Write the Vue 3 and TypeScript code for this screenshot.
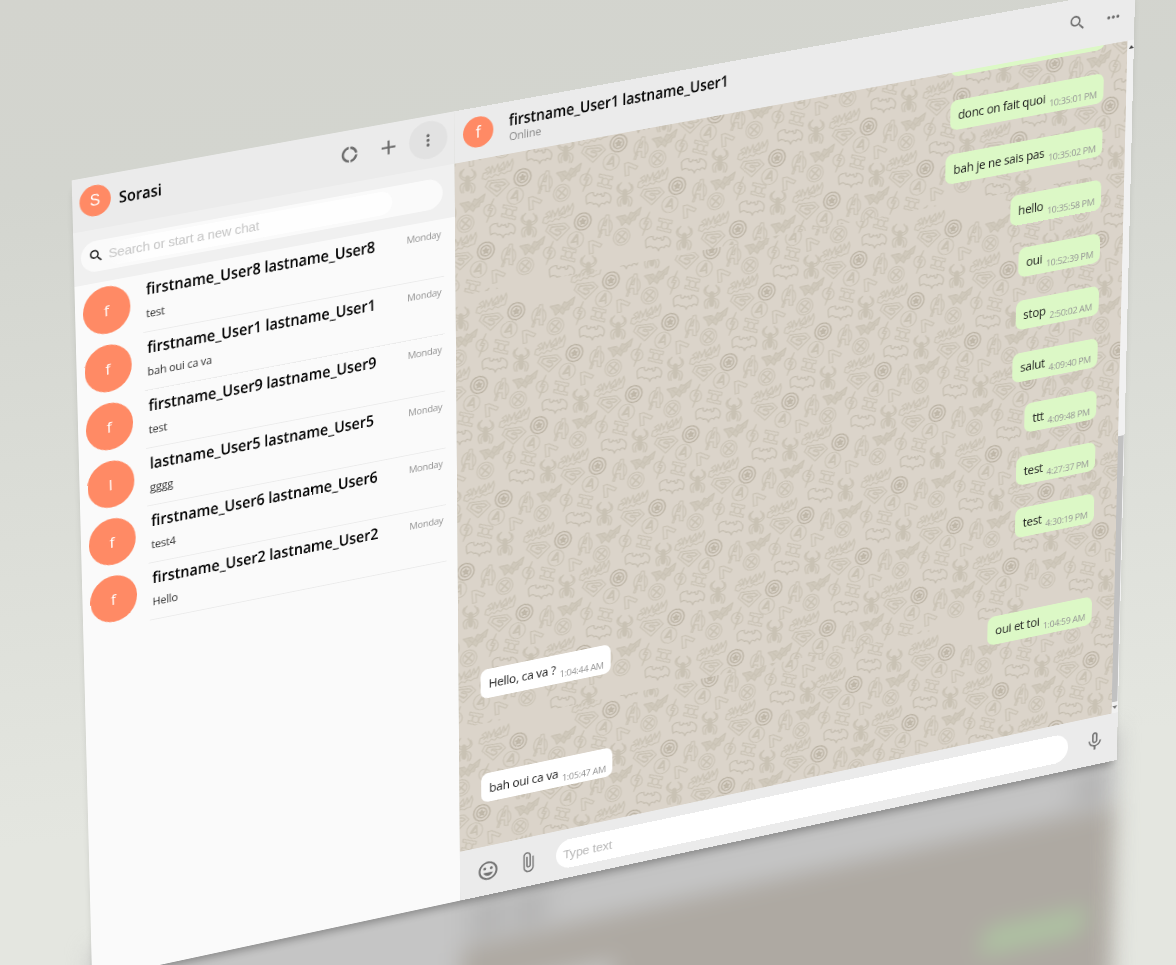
<script setup lang="ts">
interface Chat { initial: string; name: string; last: string }
interface Message { text: string; time: string; mine: boolean; wide?: boolean }

const chats: Chat[] = [
  { initial: 'f', name: 'firstname_User8 lastname_User8', last: 'test' },
  { initial: 'f', name: 'firstname_User1 lastname_User1', last: 'bah oui ca va' },
  { initial: 'f', name: 'firstname_User9 lastname_User9', last: 'test' },
  { initial: 'l', name: 'lastname_User5 lastname_User5', last: 'gggg' },
  { initial: 'f', name: 'firstname_User6 lastname_User6', last: 'test4' },
  { initial: 'f', name: 'firstname_User2 lastname_User2', last: 'Hello' },
]

const messages: Message[] = [
  { text: '', time: '', mine: true, wide: true },
  { text: 'donc on fait quoi', time: '10:35:01 PM', mine: true },
  { text: 'bah je ne sais pas', time: '10:35:02 PM', mine: true },
  { text: 'hello', time: '10:35:58 PM', mine: true },
  { text: 'oui', time: '10:52:39 PM', mine: true },
  { text: 'stop', time: '2:50:02 AM', mine: true },
  { text: 'salut', time: '4:09:40 PM', mine: true },
  { text: 'ttt', time: '4:09:48 PM', mine: true },
  { text: 'test', time: '4:27:37 PM', mine: true },
  { text: 'test', time: '4:30:19 PM', mine: true },
  { text: 'Hello, ca va ?', time: '1:04:44 AM', mine: false },
  { text: 'oui et toi', time: '1:04:59 AM', mine: true },
  { text: 'bah oui ca va', time: '1:05:47 AM', mine: false },
]

// Origins of the doodle groups inside one wallpaper tile
const tile = { x: 440, y: 213, width: 520, height: 513 }
const origins: number[][] = [
  [543, 167], [839, 198], [733, 215], [614, 228], [503, 243], [909, 259], [799, 276], [684, 290], [571, 305],
  [459, 321], [867, 336], [754, 351], [641, 367], [529, 382], [940, 397], [828, 412], [709, 428], [598, 444],
  [487, 461], [889, 473], [777, 490], [669, 508], [557, 524], [442, 539], [848, 553], [737, 570],
  [623, 583], [511, 602], [919, 617], [810, 634], [692, 645], [581, 666], [468, 679], [876, 696], [764, 709],
]
const cells = origins
  .flatMap(([x, y]) => [-tile.width, 0, tile.width].map((dx) => ({ x: x + dx - tile.x, y: y - tile.y })))
  .filter((c) => c.x > -150 && c.x < tile.width + 50)
</script>

<template>
  <div class="scene">
    <div class="plane">
      <div class="mirror">
        <div class="mirror-side"></div>
        <div class="mirror-chat">
          <div class="mirror-foot"><i></i><i></i><b></b><i></i></div>
          <div class="mirror-wall">
            <span class="white"></span>
            <span class="green"></span>
          </div>
        </div>
      </div>

      <div class="window">
        <aside class="side">
          <header class="bar side-bar">
            <div class="avatar small sans">S</div>
            <div class="me">Sorasi</div>
            <nav class="actions">
              <span class="btn">
                <svg width="21.5" height="21.5" viewBox="0 0 24 24"><path d="M11 5.08V2c-5 .5-9 4.81-9 10s4 9.5 9 10v-3.08c-3-.48-6-3.4-6-6.92s3-6.44 6-6.92zM18.97 11H22c-.47-5-4-8.530-9-9v3.08C16 5.510 18.540 8 18.970 11zM13 18.920V22c5-.47 8.530-4 9-9h-3.030c-.43 3-2.970 5.490-5.970 5.920z" /></svg>
              </span>
              <span class="btn">
                <svg width="27" height="27" viewBox="0 0 24 24"><path d="M19 13h-6v6h-2v-6H5v-2h6V5h2v6h6v2z" /></svg>
              </span>
              <span class="btn on">
                <svg width="21.5" height="21.5" viewBox="0 0 24 24"><path d="M12 8c1.100 0 2-.9 2-2s-.9-2-2-2-2 .9-2 2 .9 2 2 2zm0 2c-1.100 0-2 .9-2 2s.9 2 2 2 2-.9 2-2-.9-2-2-2zm0 6c-1.100 0-2 .9-2 2s.9 2 2 2 2-.9 2-2-.9-2-2-2z" /></svg>
              </span>
            </nav>
          </header>

          <div class="search">
            <div class="search-pill">
              <svg class="dark" width="18" height="18" viewBox="0 0 24 24"><path d="M15.500 14h-.79l-.28-.27C15.410 12.590 16 11.110 16 9.500 16 5.910 13.090 3 9.500 3S3 5.910 3 9.500 5.910 16 9.500 16c1.610 0 3.090-.59 4.230-1.570l.27.28v.79l5 4.990L20.490 19l-4.990-5zm-6 0C7.010 14 5 11.990 5 9.500S7.010 5 9.500 5 14 7.010 14 9.500 11.990 14 9.500 14z" /></svg>
              <div class="search-input">Search or start a new chat</div>
            </div>
          </div>

          <ul class="list">
            <li v-for="c in chats" :key="c.name" class="row">
              <div class="avatar">{{ c.initial }}</div>
              <div class="info">
                <div class="name">{{ c.name }}</div>
                <div class="last">{{ c.last }}</div>
                <span class="day">Monday</span>
              </div>
            </li>
          </ul>
        </aside>

        <section class="chat">
          <header class="bar chat-bar">
            <div class="avatar small">f</div>
            <div class="peer">
              <div class="peer-name">firstname_User1 lastname_User1</div>
              <div class="status">Online</div>
            </div>
            <nav class="actions">
              <span class="btn">
                <svg width="22.5" height="22.5" viewBox="0 0 24 24"><path d="M15.500 14h-.79l-.28-.27C15.410 12.590 16 11.110 16 9.500 16 5.910 13.090 3 9.500 3S3 5.910 3 9.500 5.910 16 9.500 16c1.610 0 3.090-.59 4.230-1.570l.27.28v.79l5 4.990L20.490 19l-4.990-5zm-6 0C7.010 14 5 11.990 5 9.500S7.010 5 9.500 5 14 7.010 14 9.500 11.990 14 9.500 14z" /></svg>
              </span>
              <span class="btn">
                <svg width="22" height="22" viewBox="0 0 24 24"><path d="M6 10c-1.100 0-2 .9-2 2s.9 2 2 2 2-.9 2-2-.9-2-2-2zm12 0c-1.100 0-2 .9-2 2s.9 2 2 2 2-.9 2-2-.9-2-2-2zm-6 0c-1.100 0-2 .9-2 2s.9 2 2 2 2-.9 2-2-.9-2-2-2z" /></svg>
              </span>
            </nav>
          </header>

          <div class="body">
            <div class="wall">
              <svg class="paper" viewBox="432.5 59 799 818.500" preserveAspectRatio="none">
                <defs>
                  <g id="doodles" fill="none" stroke="#c9c2b4" stroke-width="1.200" stroke-linejoin="round" stroke-linecap="round">
                    <g stroke="#bab2a3">
                      <circle r="9.800" stroke-width="1.500" />
                      <circle r="6" stroke-width="1.600" />
                      <path d="M0-3.500l1 2.300 2.500.2-1.900 1.700.6 2.500L0 2l-2.200 1.200.6-2.500L-3.500-1l2.500-.2z" fill="#c3bbac" />
                    </g>
                    <g transform="translate(-8.600 20)"><circle r="9.500" /><path d="M1.500-6L-5 2h7M2.500-5.500v11M-2 0l3.500-4.500" stroke-width="2" /></g>
                    <g transform="translate(45.600 26.400)"><circle r="9.800" /><circle r="6.800" /><path d="M-4.500-4.500l9 9M4.500-4.500l-9 9" stroke-width="2" /></g>
                    <g transform="matrix(1.110 .2 -.03 1.120 -27.600 -12.700)">
                      <path d="M-16 3l5-2-3-2 4-3 2 7 1-8 3 6 3-8 1 8 5-2-5-1 5-7 1 8 3-9 2 5 3-7 1 4-2 8-4 1-3 2-4-1-2 3-4-1-3 3-3-1-3 3-4-1z" />
                      <path d="M-12 4l3-3M-5 2l1-4M2 0l2-3M9-3l1-4" />
                    </g>
                    <g transform="matrix(1.110 .2 -.03 1.120 -28.800 6.800)">
                      <path d="M-13-1l3-6 17-2 5 5L-1 9z" />
                      <path d="M-9-1l2-4 12-1 3 2-3 2-5-1c-4 0-4 2 0 2s4 3-1 5zM-4 2l3 1" stroke-width="1.500" />
                    </g>
                    <g transform="matrix(1.110 .2 -.03 1.120 26 10.900)">
                      <path d="M-7 11L1-12h3l1 21H1V3h-4l-2 8zM-2-1h3l1-7z" />
                      <path d="M-1-9C-8-6-9 5-3 7M5-7c4 4 3 11 0 13" />
                    </g>
                    <path transform="matrix(1.110 .2 -.03 1.120 14.700 32.800)" d="M-6 7l-1-13 4-1 10 4-2 3-8-3 1 9z" />
                    <g transform="matrix(1.110 .2 -.03 1.120 53.800 4.800)" fill="#d0c9bc">
                      <path d="M-13 0l9-2 3 3 3-6 3 1 8-6-2 8-3 1-1 4-4 1-2 4-4-3-4 4-2-5z" />
                      <path d="M-7 1l4 3 3-4 2 3 6-7" />
                    </g>
                    <g transform="matrix(1.110 .2 -.03 1.120 73.800 16.400)"><circle r="6.200" /><path d="M4-12L-2 0h3l-4 12L3-2H0z" /></g>
                    <g transform="matrix(1.110 .2 -.03 1.120 96.200 22.700)">
                      <path d="M-6-8L8-5l-.5 3-3-.5-1.500 6 4 1-.5 3L-8 4l.5-3 4 .8 1-6-4-.8z" /><circle r="3.500" />
                    </g>
                    <path transform="matrix(1.110 .2 -.03 1.120 88.200 41.700)" d="M-13-3c2-4 6-4 8-4-1 3 1 4 3 3l1-2 1 1h2l1-1 1 3c2 0 3-1 2-4 3 0 6 2 7 4 1 2 0 5-1 7-3-3-5-1-5 1-2-2-5-1-6 3-1-4-4-4-6-3-1-2-4-3-7 0-1-3-1-5-1-8z" stroke="#c3bcae" />
                    <g transform="matrix(1.110 .2 -.03 1.120 119.400 41.700)" stroke-width="1.400">
                      <path d="M-2-2c0-4 4-4 4 0v9c0 4-4 4-4 0z" fill="#c9c2b4" />
                      <path d="M-2-3c-6-1-6-5-2-9M2-3c6-1 6-5 2-9M-2 0c-8-3-7-7-5-10M2 0c8-3 7-7 5-10M-2 2c-6 0-7 5-4 10M2 2c6 0 7 5 4 10M-3 4c-2 2-2 5-1 8M3 4c2 2 2 5 1 8" />
                    </g>
                  </g>
                  <pattern id="tile" patternUnits="userSpaceOnUse" :x="tile.x" :y="tile.y" :width="tile.width" :height="tile.height">
                    <use v-for="(c, i) in cells" :key="i" href="#doodles" :x="c.x" :y="c.y" />
                  </pattern>
                </defs>
                <rect x="432" y="59" width="800" height="819" fill="url(#tile)" />
              </svg>
              <div class="thread">
                <div v-for="(m, i) in messages" :key="i" class="bubble" :class="{ mine: m.mine, wide: m.wide }">
                  <span class="text">{{ m.text }}</span>
                  <span class="time">{{ m.time }}</span>
                </div>
              </div>
            </div>
            <div class="track">
              <i class="up"></i>
              <div class="thumb"></div>
              <i class="down"></i>
            </div>
          </div>

          <footer class="composer">
            <svg class="smile" width="27" height="27" viewBox="0 0 24 24"><path d="M11.990 2C6.470 2 2 6.480 2 12s4.470 10 9.990 10C17.520 22 22 17.520 22 12S17.520 2 11.990 2zM12 20c-4.420 0-8-3.580-8-8s3.580-8 8-8 8 3.580 8 8-3.580 8-8 8zm3.500-9c.83 0 1.500-.67 1.500-1.500S16.330 8 15.500 8 14 8.670 14 9.500s.67 1.500 1.500 1.500zm-7 0c.83 0 1.500-.67 1.500-1.500S9.330 8 8.500 8 7 8.670 7 9.500 7.670 11 8.500 11zm3.500 6.500c2.330 0 4.310-1.460 5.110-3.500H6.890c.8 2.040 2.780 3.500 5.110 3.500z" /></svg>
            <svg class="clip" width="27" height="27" viewBox="0 0 24 24"><path d="M16.500 6v11.500c0 2.210-1.790 4-4 4s-4-1.790-4-4V5c0-1.380 1.120-2.500 2.500-2.500s2.500 1.120 2.500 2.500v10.500c0 .55-.45 1-1 1s-1-.45-1-1V6H10v9.500c0 1.380 1.120 2.500 2.500 2.500s2.500-1.120 2.500-2.500V5c0-2.210-1.790-4-4-4S7 2.790 7 5v12.500c0 3.040 2.460 5.500 5.500 5.500s5.500-2.460 5.500-5.500V6h-1.500z" /></svg>
            <div class="field">Type text</div>
            <svg class="mic" width="27" height="27" viewBox="0 0 24 24"><path d="M12 14c1.660 0 2.990-1.340 2.990-3L15 5c0-1.660-1.340-3-3-3S9 3.340 9 5v6c0 1.660 1.340 3 3 3zm-1.200-9.100c0-.66.54-1.200 1.200-1.200.66 0 1.200.54 1.200 1.200l-.01 6.200c0 .66-.53 1.200-1.190 1.200-.66 0-1.200-.54-1.200-1.200V4.900zm6.500 6.100c0 3-2.540 5.100-5.300 5.100S6.700 14 6.700 11H5c0 3.410 2.720 6.230 6 6.720V21h2v-3.280c3.280-.48 6-3.300 6-6.720h-1.700z" /></svg>
          </footer>
        </section>
      </div>
    </div>
  </div>
</template>

<style>
html, body { margin: 0; overflow: hidden; }
</style>

<style scoped>
* { box-sizing: border-box; }
.scene {
  position: relative;
  width: 1176px;
  height: 965px;
  overflow: hidden;
  background: linear-gradient(174deg, #d3d4ce 0%, #d3d5cf 18%, #dcded8 50%, #e4e6e0 78%, #e4e6e0 100%);
  font-family: "Open Sans", "Noto Sans", sans-serif;
  color: #000;
}
.plane {
  position: absolute;
  left: 0;
  top: 0;
  width: 1240px;
  height: 937px;
  transform-origin: 0 0;
  transform: matrix3d(0.900411, -0.15525, 0, 0.00003765, 0.025599, 0.893308, 0, 0.00004142, 0, 0, 1, 0, 71.7, 180.4, 0, 1);
}
.window {
  position: relative;
  display: flex;
  width: 1240px;
  height: 937px;
  box-shadow: 0 9px 10px -5px rgba(0, 0, 0, 0.3);
}
svg { display: block; fill: #6c6c6c; flex: none; }
.side { width: 432.5px; background: #fafafa; }
.chat { flex: 1; display: flex; flex-direction: column; min-width: 0; }
.bar { display: flex; height: 59.600px; background: #ebebeb; align-items: center; padding-bottom: 4.600px; }
.side-bar { padding-left: 7.5px; padding-right: 8px; }
.chat-bar { padding-left: 10px; padding-right: 4.500px; padding-bottom: 2.600px; }
.chat-bar .btn { margin-left: 0; }
.avatar {
  width: 53.6px; height: 53.6px; border-radius: 50%; background: #ff8a65; color: #fff;
  display: flex; align-items: center; justify-content: center; font: 400 17px "Noto Sans", sans-serif; flex: none;
}
.avatar.small { width: 35.800px; height: 35.800px; font-size: 17.500px; }
.avatar.sans { font-family: "Liberation Sans", Arial, sans-serif; }
.me, .name, .peer-name {
  font-size: 18px; font-weight: 560; white-space: nowrap; transform: scaleX(0.91); transform-origin: 0 50%;
}
.me { margin-left: 9px; line-height: 24px; }
.actions { display: flex; margin-left: auto; }
.btn { width: 43.500px; height: 43.500px; margin-left: 1.500px; border-radius: 50%; display: flex; align-items: center; justify-content: center; }
.btn.on { background: #e2e2e2; }
.search { height: 61.600px; background: #f0f0f0; padding: 13.300px 13.400px 0 8px; }
.search-pill { height: 35px; border-radius: 18px; background: #fafafa; display: flex; align-items: center; padding-left: 8px; }
.dark { fill: #111; }
.search-input {
  margin-left: 5px; width: 322px; height: 27px; border-radius: 14px; line-height: 27px;
  background: linear-gradient(90deg, #fafafa, #fefefe 12%, #fefefe);
  font-family: "Liberation Sans", Arial, sans-serif; font-size: 14.900px; letter-spacing: -0.150px; color: #c6c6c6; white-space: nowrap;
}
.list { list-style: none; margin: 0; padding: 0; }
.row { display: flex; height: 67px; padding: 6.300px 12.600px 0 8.500px; }
.row .info { position: relative; flex: 1; min-width: 0; height: 60.500px; margin-left: 13.500px; padding-left: 4px; border-bottom: 1.200px solid #ebebeb; }
.name { line-height: 22px; margin-top: -0.500px; }
.last { font-size: 12.500px; letter-spacing: -0.250px; line-height: 18px; margin-top: 9px; color: #333; }
.day { position: absolute; right: 3.500px; top: 3px; font-size: 10.900px; letter-spacing: -0.300px; line-height: 16px; color: #929292; }
.peer { margin-left: 17.800px; }
.peer-name { line-height: 22px; transform: scaleX(0.895); }
.status { font-size: 12.500px; letter-spacing: -0.200px; line-height: 15px; margin-top: 1px; color: #8a8a8a; }
.body { display: flex; height: 817.900px; }
.wall { position: relative; width: 799px; background: #dbd4ca; overflow: hidden; }
.paper { width: 799px; height: 818.500px; }
.thread {
  position: absolute; left: 0; right: 0; top: -29.800px; padding: 0 27.200px 0 26.600px;
  display: flex; flex-direction: column; align-items: flex-start; gap: 28px;
}
.bubble {
  height: 35.200px; border-radius: 8.500px; background: #fff; padding: 0 8.400px 0 9.500px; display: flex; white-space: nowrap;
}
.bubble.mine { align-self: flex-end; background: #dcf8c6; }
.bubble.wide { width: 186.700px; }
.text { font-size: 14.100px; letter-spacing: -0.300px; line-height: 20px; padding-top: 8.500px; color: #1c1c1c; }
.time { font-size: 10.900px; letter-spacing: -0.370px; line-height: 16px; padding-top: 16.500px; margin-left: 4.500px; color: #969696; }
.track { flex: 1; background: #f1f1f1; display: flex; flex-direction: column; align-items: center; }
.track i { border: 3px solid transparent; }
.track .up { border-bottom: 4px solid #444; border-top: 0; margin: 6px 0 0 2px; }
.track .down { border-top: 4px solid #777; border-bottom: 0; margin-top: 5px; }
.thumb { width: 7px; height: 329px; margin-top: 464px; background: #c1c1c1; }
.composer { display: flex; align-items: center; height: 59.500px; background: #ebebeb; padding-left: 20.500px; }
.clip { margin-left: 21px; }
.field {
  margin-left: 19.500px; width: 630.500px; height: 35px; line-height: 36px; border-radius: 18px; background: #fff; padding-left: 9px;
  font-family: "Liberation Sans", Arial, sans-serif; font-size: 14.900px; letter-spacing: -0.150px; color: #b9b9b9;
}
.mic { margin-left: 20px; }
.smile, .clip, .mic { fill: #737373; }

/* Floor reflection of the window */
.mirror { position: absolute; left: 0; top: 900px; width: 1240px; height: 700px; display: flex; filter: blur(14px); }
.mirror-side { width: 432.5px; background: #c5c5c5; }
.mirror-chat { flex: 1; background: #aea9a2; }
.mirror-foot { height: 96.500px; padding: 49px 15px 0 22px; background: #bebebe; display: flex; }
.mirror-foot i { width: 24px; height: 34px; margin-right: 25px; background: #b0b0b0; }
.mirror-foot b { width: 632px; height: 34px; margin: 0 20px 0 -8px; border-radius: 18px; background: #c6c6c6; }
.mirror-foot i:last-child { margin: 0; }
.mirror-wall { display: flex; padding: 55px 36px 0 26px; justify-content: space-between; }
.mirror-wall span { height: 34px; border-radius: 9px; }
.white { width: 158px; background: #c6c6c5; }
.green { width: 131px; margin-top: 63px; background: #aec2a2; }
</style>
